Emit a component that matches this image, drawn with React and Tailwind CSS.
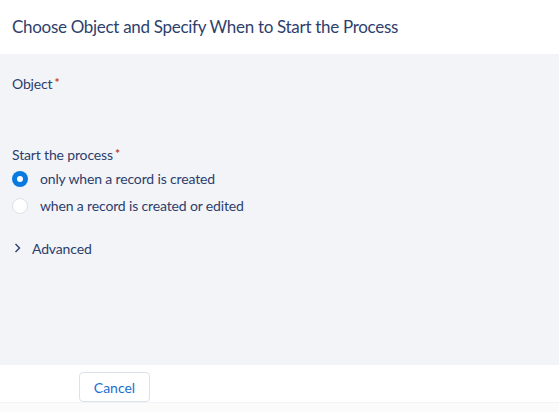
export default function App() {
  const font = { fontFamily: 'Lato, "Open Sans", sans-serif' };
  return (
    <div className="w-[559px] h-[412px] flex flex-col bg-white text-[#2c3e6b]" style={font}>
      <div className="h-[54px] flex items-center px-3 bg-white">
        <h1 className="text-[17px] tracking-[-0.3px] text-[#2e3f6d]">Choose Object and Specify When to Start the Process</h1>
      </div>
      <div className="flex-1 bg-[#f3f4f8] px-3 pt-[19px] text-[14px] tracking-[-0.15px]">
        <div className="leading-[22px] flex items-start">
          Object<span className="text-[#c23934] text-[12px] font-bold ml-[2px] leading-[19px]">*</span>
        </div>
        <div className="mt-[49px] leading-[22px] flex items-start">
          Start the process<span className="text-[#c23934] text-[12px] font-bold ml-[2px] leading-[19px]">*</span>
        </div>
        <div className="flex items-center gap-[12px] -mt-[1px] h-[27px]">
          <span className="w-[16px] h-[16px] rounded-full bg-[#0a7ae0] flex items-center justify-center">
            <span className="w-[6px] h-[6px] rounded-full bg-white" />
          </span>
          <span>only when a record is created</span>
        </div>
        <div className="flex items-center gap-[12px] h-[27px]">
          <span className="w-[16px] h-[16px] rounded-full bg-white border border-[#dde1e8]" />
          <span>when a record is created or edited</span>
        </div>
        <div className="flex items-center gap-[10px] mt-[18px] h-[22px] pl-[2px]">
          <svg width="8" height="10" viewBox="0 0 8 10" fill="none">
            <path d="M1.5 1 L5.5 5 L1.5 9" stroke="#2c3e6b" strokeWidth="1.4" />
          </svg>
          <span>Advanced</span>
        </div>
      </div>
      <div className="h-[37px] bg-white flex items-start pl-[79px] pt-[7px]">
        <button className="w-[71px] h-[30px] rounded-[4px] border border-[#dde2ea] bg-white text-[14px] text-[#1a6fcf]">Cancel</button>
      </div>
      <div className="h-[10px] bg-[#fbfbfc] border-t border-[#f2f3f5]" />
    </div>
  );
}
